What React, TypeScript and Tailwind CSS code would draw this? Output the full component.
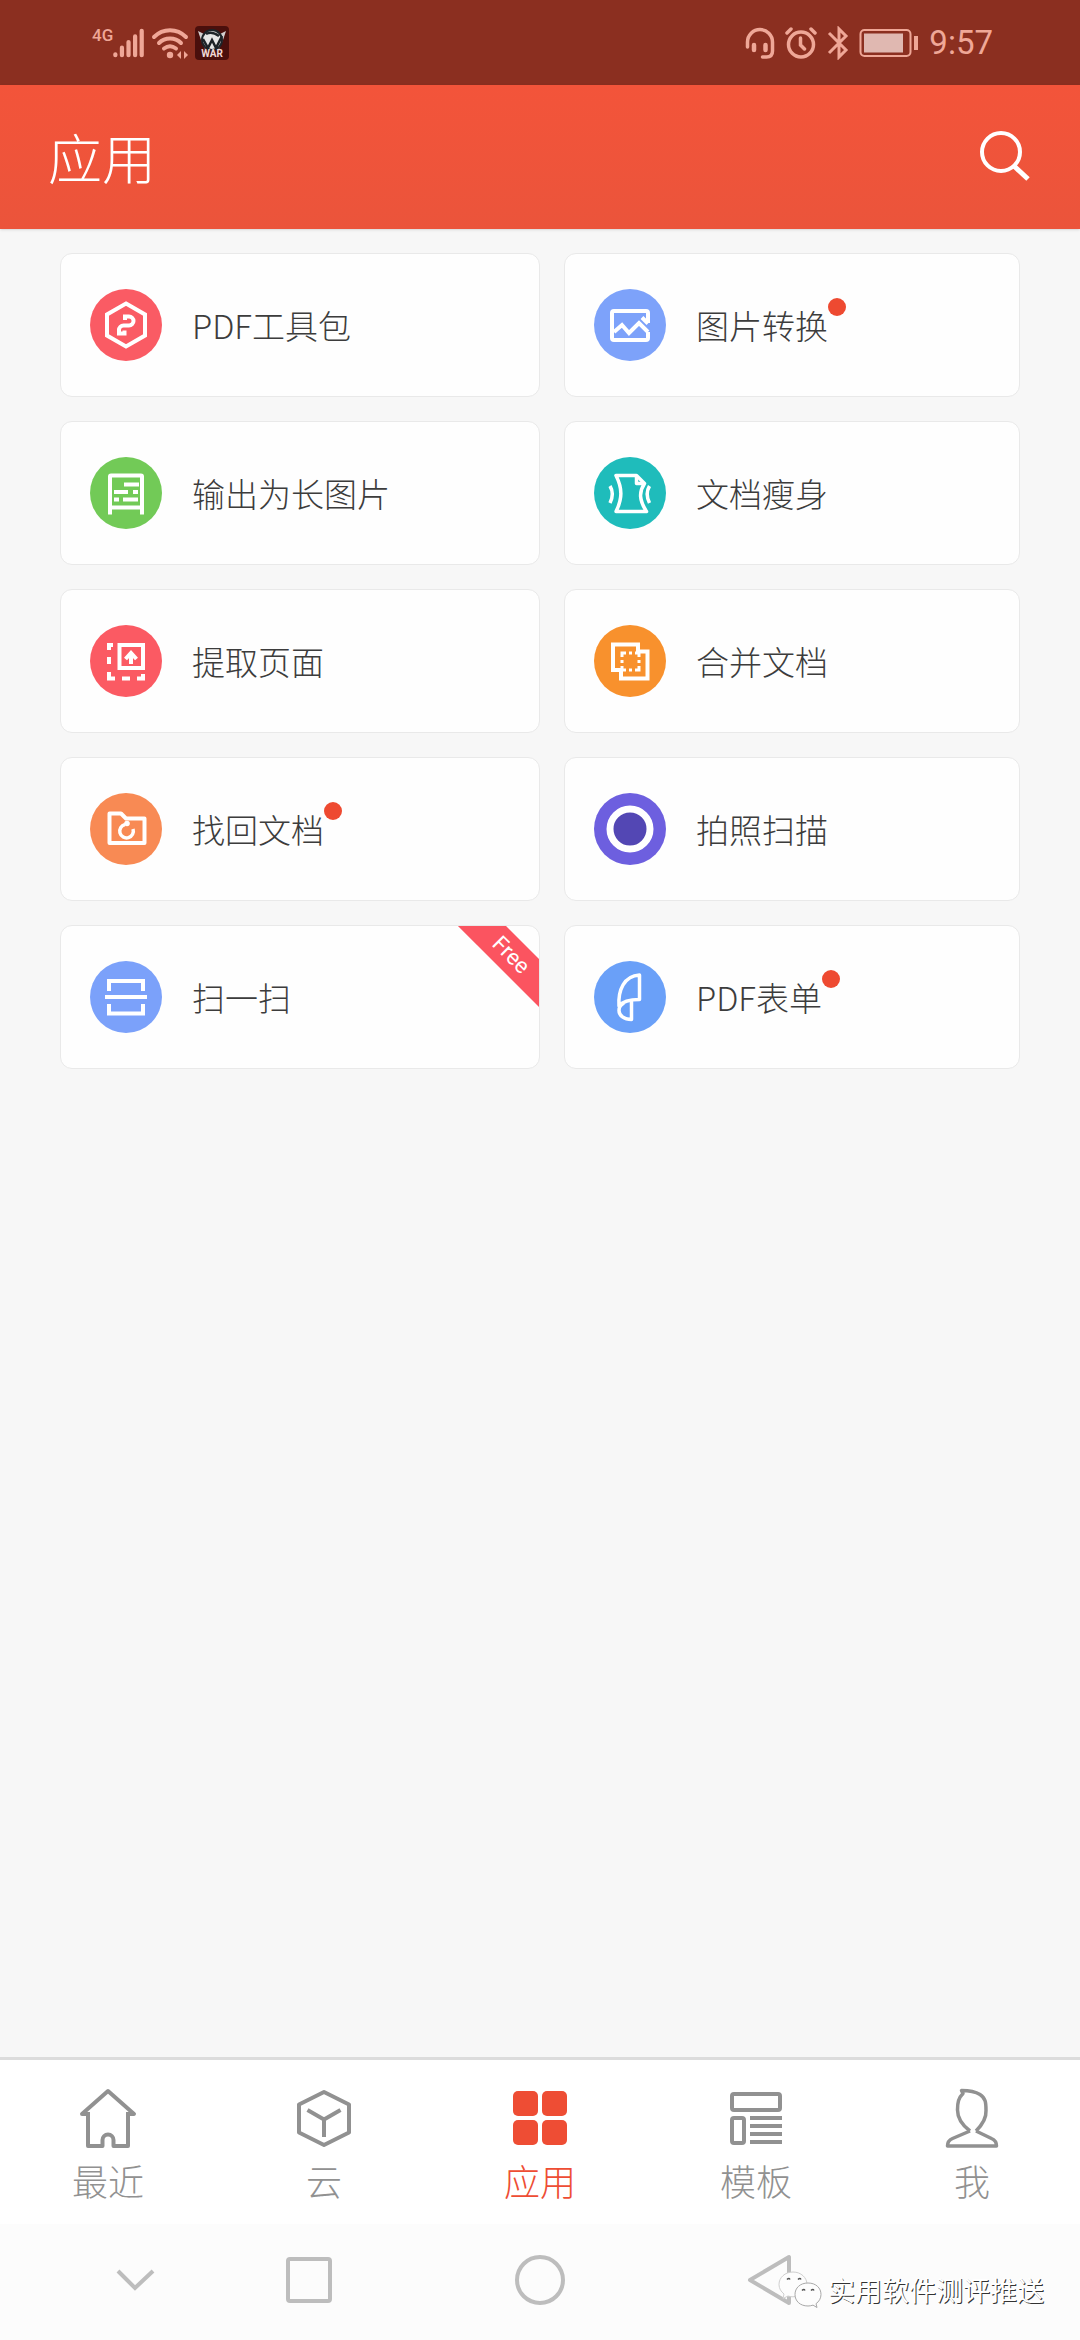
import React, { useState } from 'react';

interface Tool {
  name: string;
  color: string;
  icon: React.ReactNode;
  dot?: boolean;
  free?: boolean;
}

interface Tab {
  name: string;
  icon: React.ReactNode;
}

const TOOLS: Tool[] = [
  {
    name: 'PDF工具包',
    color: 'bg-[#fa5b64]',
    icon: (
      <g strokeWidth="4">
        <path d="M36 14.5 55 25.5v21L36 57.5 17 46.5v-21z" />
        <path d="M35 31v-3.500h4a4.500 4.500 0 0 1 0 9h-5.500a4.500 4.500 0 0 0-4.500 4.500v3.500h5.500v-3" />
      </g>
    )
  },
  {
    name: '图片转换',
    color: 'bg-[#7da2fa]',
    dot: true,
    icon: (
      <g strokeWidth="4">
        <path d="M54 34V24a2 2 0 0 0-2-2H20a2 2 0 0 0-2 2v25a2 2 0 0 0 2 2h32a2 2 0 0 0 2-2v-6" />
        <path d="m20 43 8-7 7 8 10-10 9 9M48 28.500l6 6" />
      </g>
    )
  },
  {
    name: '输出为长图片',
    color: 'bg-[#72ca57]',
    icon: (
      <g strokeWidth="4">
        <path d="M20 57.500V19.500a1 1 0 0 1 1-1h30a1 1 0 0 1 1 1v38" />
        <path d="M34 27.500h15M24 35h14M43 35h5M24 42.500h5M33 42.500h15M21 50.500h30" />
      </g>
    )
  },
  {
    name: '文档瘦身',
    color: 'bg-[#1fbcbb]',
    icon: (
      <g strokeWidth="3.500" strokeLinejoin="round">
        <path d="M22 18.500h20.500l8 8c-6 9-5 17 2 28H22c6.500-13 6.500-23 0-36z" />
        <path d="M42.500 18.500v8h8" />
        <path d="M16 29c3 5 3 11 0 17M55.500 29c-3 5-3 11 0 17" />
      </g>
    )
  },
  {
    name: '提取页面',
    color: 'bg-[#fb5a63]',
    icon: (
      <g strokeWidth="4">
        <path d="M19 25v-5h4M19 32v7M19 47v6.500h6M32 53.500h8M47 53.500h6V49" />
        <path d="M29.500 20H53v23H29.500z" />
        <path d="M41 39V28M35.500 34l5.500-6 5.500 6" />
      </g>
    )
  },
  {
    name: '合并文档',
    color: 'bg-[#f8912d]',
    icon: (
      <g>
        <path strokeWidth="4" d="M19 19.500h25v7h9.500V53.500H27V45h-8z" />
        <path strokeWidth="3" d="M28 32v-4h4M35 28h3M41 28h4v4M45 35v3M45 41v4h-4M38 45h-3M32 45h-4v-4M28 38v-3" />
      </g>
    )
  },
  {
    name: '找回文档',
    color: 'bg-[#f88a54]',
    dot: true,
    icon: (
      <g strokeWidth="4">
        <path d="M19.500 20.500H31l5 5h18.500V50h-35z" strokeLinejoin="round" />
        <path strokeWidth="3.500" d="M43 36a6.800 6.800 0 1 1-8-4.500" />
        <circle cx="37" cy="30.500" r="2.800" fill="#fff" stroke="none" />
      </g>
    )
  },
  {
    name: '拍照扫描',
    color: 'bg-[#6d5fdf]',
    icon: <circle cx="36" cy="36" r="20" strokeWidth="7" fill="#5347b4" />
  },
  {
    name: '扫一扫',
    color: 'bg-[#7ba1fa]',
    free: true,
    icon: <path strokeWidth="4" d="M19 30V20h34v10M15 36h42M19 43v9.500h34V43" />
  },
  {
    name: 'PDF表单',
    color: 'bg-[#6aa0f8]',
    dot: true,
    icon: (
      <g strokeWidth="3.500" strokeLinejoin="round">
        <path d="M45.500 14v24.500C36 38.500 29 40 25 45c-1-16 5-30 20.500-31z" />
        <path d="M37.500 40v18.500c-7.500 0-12.500-4-12.500-9 0-3 2-6 5-7.500" />
      </g>
    )
  }
];

const TABS: Tab[] = [
  {
    name: '最近',
    icon: (
      <path d="M10 26.500V58h14.500v-6a5.500 5.500 0 0 1 11 0v6H50V26.500M12 26H4L30 3l26 23h-8" />
    )
  },
  {
    name: '云',
    icon: <path d="M30 4 55 16.500v28L30 57 5 44.500v-28zM13.500 22 30 31.500 46.500 22M30 31.500V49" />
  },
  {
    name: '应用',
    icon: (
      <g fill="currentColor" stroke="none">
        <rect x="3" y="3" width="25" height="25" rx="5" />
        <rect x="32" y="3" width="25" height="25" rx="5" />
        <rect x="3" y="32" width="25" height="25" rx="5" />
        <rect x="32" y="32" width="25" height="25" rx="5" />
      </g>
    )
  },
  {
    name: '模板',
    icon: (
      <g>
        <rect x="6" y="6" width="48" height="16" rx="2" />
        <rect x="6" y="30" width="12" height="25" rx="2" />
        <path d="M24 30h32M24 38h32M24 46h32M24 54h32" />
      </g>
    )
  },
  {
    name: '我',
    icon: (
      <g strokeWidth="3.500">
        <path d="M28 43C20 37 15.500 29 15.500 22c0-8 1-12 5.500-16.500L19.500 2.500C27 2.500 34 4 38 6.500c5.500 3.500 6 8 6 16C44.500 30 40 37 34 43" />
        <path d="M28 43 10.500 50.500C7 52 5.500 54 5.500 58h49c0-4-1.500-6-5-7.500L34 43" />
      </g>
    )
  }
];

const StatusBar = () => (
  <div className="flex h-[85px] items-center justify-between bg-[#8b2f20] pr-[87px] pl-[92px] text-[#efa797]">
    <div className="flex items-center gap-1.5">
      <div className="flex items-start">
        <span className="font-[Roboto] text-[17px] leading-[17px] font-medium">4G</span>
        <svg width="32" height="32" viewBox="0 0 34 32" fill="none" stroke="currentColor" strokeWidth="4.500" strokeLinecap="round">
          <path d="M2.500 29v-1M9.500 29v-8M16.500 29V15M23.500 29V9M30.500 29V3" />
        </svg>
      </div>
      <svg width="38" height="32" viewBox="0 0 38 32" fill="none" stroke="currentColor" strokeWidth="4" strokeLinecap="round">
        <path d="M3 10c9-9 23-9 32 0M8 16c6-6 16-6 22 0M13 21.500c4-3 8-3 12 0" />
        <circle cx="19" cy="28" r="3.200" fill="currentColor" stroke="none" />
        <path d="m30 24-4 4 4 4zM33 24l4 4-4 4z" fill="currentColor" stroke="none" />
      </svg>
      <svg width="34" height="34" viewBox="0 0 34 34">
        <rect width="34" height="34" rx="4" fill="#4a0f0c" />
        <path d="m3 5 8 4 6-4 6 4 8-4-3 9-4 9H10L6 14z" fill="#d3cfcf" />
        <circle cx="17" cy="14" r="10" fill="#e6e6e6" stroke="#1d2328" strokeWidth="2" />
        <path d="m8 13 5 9 4-8 4 8 6-12M11 8c5-3 9-1 13 2" fill="none" stroke="#1d2328" strokeWidth="2.500" />
        <text x="17" y="31" textAnchor="middle" fontFamily="Roboto" fontWeight="700" fontSize="10" fill="#f1d9d6">WAR</text>
      </svg>
    </div>
    <div className="flex items-center gap-2.5">
      <svg width="30" height="32" viewBox="0 0 30 32" fill="none" stroke="currentColor" strokeWidth="3.500" strokeLinecap="round">
        <path d="M2.500 20v-5a12.500 12.500 0 0 1 25 0v9c0 4-2 6-6 6h-4" />
        <path strokeWidth="4.500" d="M9 18v5M20.500 18v5" />
      </svg>
      <svg width="32" height="32" viewBox="0 0 32 32" fill="none" stroke="currentColor" strokeWidth="3.500" strokeLinecap="round">
        <circle cx="16" cy="17.500" r="12.500" />
        <path d="M15.500 11v7l4 4M2 6l4-4M30 6l-4-4" />
      </svg>
      <svg width="22" height="34" viewBox="0 0 22 34" fill="none" stroke="currentColor" strokeWidth="3">
        <path d="m2 7 17 17-7 7V3l7 7L2 27" />
      </svg>
      <svg width="60" height="28" viewBox="0 0 60 28" fill="none" stroke="currentColor">
        <rect x="1.500" y="1" width="50" height="26" rx="4" strokeWidth="2" />
        <rect x="5" y="4.500" width="39" height="19" fill="#e0b8b1" stroke="none" />
        <path d="M57 7v14" strokeWidth="4" />
      </svg>
      <span className="font-[Roboto] text-[33px] leading-10">9:57</span>
    </div>
  </div>
);

const ToolCard = ({ tool }: { tool: Tool }) => (
  <button className="relative flex h-36 items-center gap-[30px] overflow-hidden rounded-xl border border-[#e9e9e9] bg-[#fefefe] px-[29px] text-left">
    <span className={`size-[72px] shrink-0 rounded-full ${tool.color}`}>
      <svg width="72" height="72" viewBox="0 0 72 72" fill="none" stroke="#fff">
        {tool.icon}
      </svg>
    </span>
    <span className="relative text-[33px] leading-[54px] font-light text-[#3c3c3c]">
      {tool.name}
      {tool.dot && <i className="absolute top-0 left-full size-[18px] rounded-full bg-[#ee4a31]" />}
    </span>
    {tool.free && (
      <span className="absolute top-3 -right-[52px] w-40 rotate-45 bg-[#fb5460] text-center font-[Roboto] text-[22px] leading-[34px] text-white">
        Free
      </span>
    )}
  </button>
);

const SystemBar = () => (
  <div className="relative grid h-[116px] grid-cols-[174fr_174fr_288fr_174fr] place-items-center bg-[#fcfcfc] pr-[222px] pb-1 pl-12 text-[#bdbdbd]">
    <button aria-label="收起">
      <svg width="40" height="52" viewBox="0 0 40 52" fill="none" stroke="currentColor" strokeWidth="4">
        <path d="m3 17 17 17 18-17" />
      </svg>
    </button>
    <button aria-label="任务">
      <svg width="52" height="52" viewBox="0 0 52 52" fill="none" stroke="currentColor" strokeWidth="4">
        <rect x="5" y="5" width="42" height="42" rx="2" />
      </svg>
    </button>
    <button aria-label="主页">
      <svg width="52" height="52" viewBox="0 0 52 52" fill="none" stroke="currentColor" strokeWidth="4">
        <circle cx="26" cy="26" r="23" />
      </svg>
    </button>
    <button aria-label="返回">
      <svg width="52" height="52" viewBox="0 0 52 52" fill="none" stroke="currentColor" strokeWidth="4" strokeLinejoin="round">
        <path d="M44 3v46L5 26z" />
      </svg>
    </button>
    <div className="absolute top-[46px] right-9 flex items-center gap-1.5">
      <svg width="44" height="40" viewBox="0 0 44 40" fill="#fdfdfd" stroke="#a8a8a8">
        <path d="M15 2C7 2 1 7.500 1 14.500c0 4 2 7 5 9.500l-1 4.500 5-2.500c2 .6 3 .8 5 .8 8 0 14-5.500 14-12.300S23 2 15 2z" stroke="#cfcfcf" />
        <path d="M30 13c-8 0-13 5-13 11.500S22 36 30 36c2 0 3-.3 5-.9l4 2.400-1-3.800c3-2 5-5.500 5-9.200C43 18 38 13 30 13z" />
        <path d="M9 9.500q2-2 3 0M20 9.500q2-2 3 0M24 20.500q2-2 3 0M33 20.500q2-2 3 0" stroke="#555" strokeWidth="1.500" fill="none" />
      </svg>
      <span className="text-[27px] leading-9 text-white [text-shadow:1px_1px_0_#333]">实用软件测评推送</span>
    </div>
  </div>
);

export default function App() {
  const [active, setActive] = useState('应用');

  return (
    <div className="flex min-h-screen flex-col bg-[#f7f7f7] font-['Noto_Sans_CJK_SC',sans-serif]">
      <StatusBar />
      <header className="flex h-36 items-center justify-between bg-linear-to-b from-[#f3543a] to-[#eb543b] px-12 shadow-sm">
        <h1 className="text-[54px] leading-[76px] font-light text-white">应用</h1>
        <button aria-label="搜索">
          <svg width="54" height="56" viewBox="0 0 54 56" fill="none" stroke="#fff" strokeWidth="4">
            <circle cx="23" cy="23" r="19" />
            <path d="m36 37 14 13" strokeWidth="5" />
          </svg>
        </button>
      </header>

      <main className="flex-1 px-15 pt-6">
        <div className="grid grid-cols-[20fr_19fr] gap-6">
          {TOOLS.map(tool => (
            <ToolCard key={tool.name} tool={tool} />
          ))}
        </div>
      </main>

      <nav className="grid grid-cols-5 border-t-[3px] border-[#dcdcdc] bg-white">
        {TABS.map(tab => (
          <button
            key={tab.name}
            onClick={() => setActive(tab.name)}
            className={`flex flex-col items-center gap-2 pt-7 pb-5 ${active === tab.name ? 'text-[#ee4d34]' : 'text-[#919191]'}`}
          >
            <svg width="60" height="60" viewBox="0 0 60 60" fill="none" stroke="currentColor" strokeWidth="4" strokeLinejoin="round">
              {tab.icon}
            </svg>
            <span className="text-[36px] leading-[48px] font-light">{tab.name}</span>
          </button>
        ))}
      </nav>
      <SystemBar />
    </div>
  );
}
